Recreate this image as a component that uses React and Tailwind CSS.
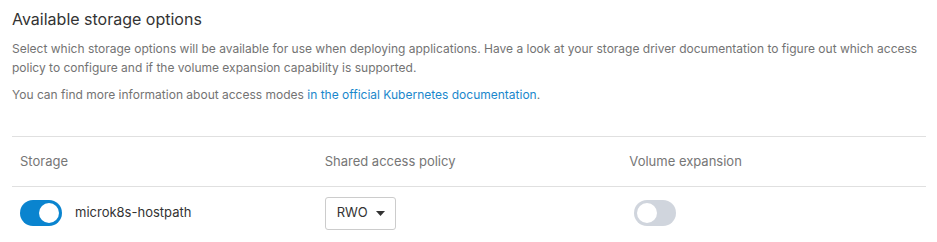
export default function App() {
  return (
    <div className="w-[937px] h-[242px] bg-white overflow-hidden px-3 pt-[7px]" style={{ fontFamily: "Inter, 'Noto Sans', sans-serif" }}>
      <h2 className="text-[16px] leading-[24px] text-[#333333] font-normal">Available storage options</h2>
      <p className="mt-[8px] text-[12px] leading-[19px] text-[#737373]">
        Select which storage options will be available for use when deploying applications. Have a look at your storage driver documentation to figure out which access policy to configure and if the volume expansion capability is supported.
      </p>
      <p className="mt-[8px] text-[12px] leading-[19px] text-[#737373]">
        You can find more information about access modes <a className="text-[#1a87cc]">in the official Kubernetes documentation</a>.
      </p>
      <div className="mt-[32px] w-[914px] border-t border-[#e0e0e0]">
        <div className="grid grid-cols-3 h-[50px] items-center border-b border-[#e0e0e0] text-[13px] text-[#767676]">
          <div className="px-2">Storage</div>
          <div className="px-2">Shared access policy</div>
          <div className="px-2">Volume expansion</div>
        </div>
        <div className="grid grid-cols-3 h-[52px] items-center text-[13px]">
          <div className="px-2 flex items-center gap-[13px]">
            <span className="w-[42px] h-[26px] rounded-full bg-[#0a84cf] flex items-center justify-end pr-[3px]">
              <span className="w-[20px] h-[20px] rounded-full bg-white" />
            </span>
            <span className="text-[#333333]">microk8s-hostpath</span>
          </div>
          <div className="px-2">
            <div className="w-[71px] h-[33px] border border-[#cccccc] rounded-[3px] flex items-center pl-[11px] pr-[10px] justify-between text-[#333333]">
              <span>RWO</span>
              <svg width="9" height="5" viewBox="0 0 9 5"><path d="M0 0h9L4.5 5z" fill="#333" /></svg>
            </div>
          </div>
          <div className="px-2 flex items-center">
            <span className="ml-[5px] w-[42px] h-[26px] rounded-full bg-[#d0d5dd] flex items-center pl-[3px]">
              <span className="w-[20px] h-[20px] rounded-full bg-white" />
            </span>
          </div>
        </div>
      </div>
    </div>
  );
}
